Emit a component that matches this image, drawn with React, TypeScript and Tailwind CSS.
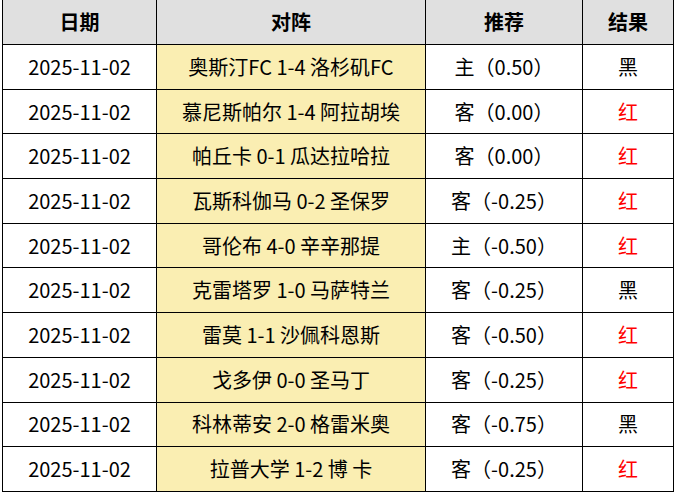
import React from "react";

type Row = {
  date: string;
  match: string;
  tip: string;
  result: "红" | "黑";
};

const ROWS: Row[] = [
  { date: "2025-11-02", match: "奥斯汀FC 1-4 洛杉矶FC", tip: "主（0.50）", result: "黑" },
  { date: "2025-11-02", match: "慕尼斯帕尔 1-4 阿拉胡埃", tip: "客（0.00）", result: "红" },
  { date: "2025-11-02", match: "帕丘卡 0-1 瓜达拉哈拉", tip: "客（0.00）", result: "红" },
  { date: "2025-11-02", match: "瓦斯科伽马 0-2 圣保罗", tip: "客（-0.25）", result: "红" },
  { date: "2025-11-02", match: "哥伦布 4-0 辛辛那提", tip: "主（-0.50）", result: "红" },
  { date: "2025-11-02", match: "克雷塔罗 1-0 马萨特兰", tip: "客（-0.25）", result: "黑" },
  { date: "2025-11-02", match: "雷莫 1-1 沙佩科恩斯", tip: "客（-0.50）", result: "红" },
  { date: "2025-11-02", match: "戈多伊 0-0 圣马丁", tip: "客（-0.25）", result: "红" },
  { date: "2025-11-02", match: "科林蒂安 2-0 格雷米奥", tip: "客（-0.75）", result: "黑" },
  { date: "2025-11-02", match: "拉普大学 1-2 博 卡", tip: "客（-0.25）", result: "红" },
];

const GRID = "grid grid-cols-[154px_269px_157px_91px]";
const CELL = "flex items-center justify-center border-r border-black";

export default function App() {
  return (
    <div className="w-[675px] h-[492px] bg-white overflow-hidden font-['Noto_Sans_CJK_SC','Noto_Sans',sans-serif] text-[20px] text-black">
      <div className="ml-[2px] w-[672px] border-l border-black">
        <div className={`${GRID} h-[45px] bg-[#e0e0e0] border-b border-black font-bold`}>
          <div className={CELL}>日期</div>
          <div className={CELL}>对阵</div>
          <div className={CELL}>推荐</div>
          <div className={CELL}>结果</div>
        </div>
        {ROWS.map((row, i) => (
          <div key={i} className={`${GRID} h-[44.7px] border-b border-black`}>
            <div className={CELL}>{row.date}</div>
            <div className={`${CELL} bg-[#faeeb2]`}>{row.match}</div>
            <div className={CELL}>{row.tip}</div>
            <div className={`${CELL} ${row.result === "红" ? "text-[#ff0000]" : "text-black"}`}>
              {row.result}
            </div>
          </div>
        ))}
      </div>
    </div>
  );
}
